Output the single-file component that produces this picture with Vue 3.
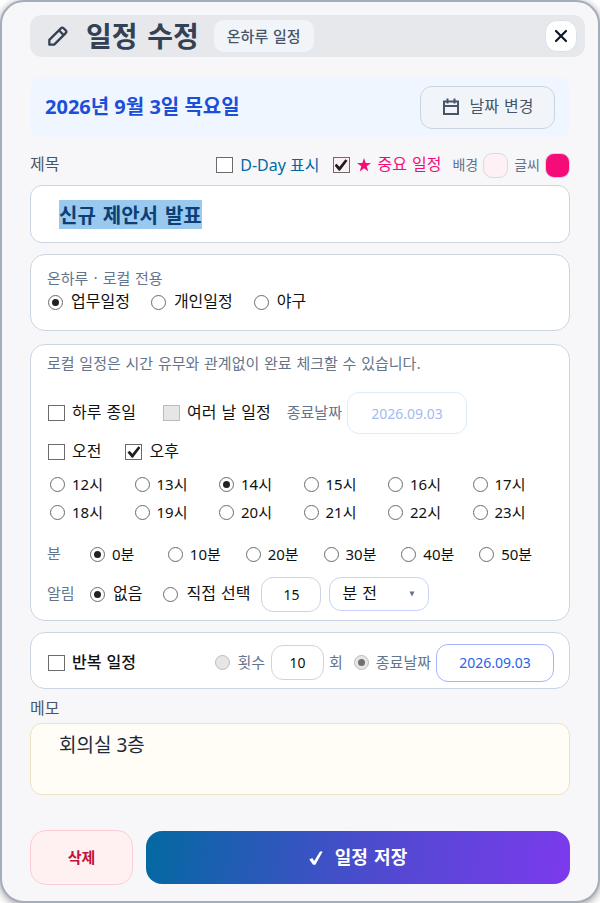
<template>
  <form class="editor" @submit.prevent>
    <header class="header">
      <svg class="pencil" viewBox="0 0 24 24" fill="none" stroke="currentColor">
        <path d="M3.5 20.5v-5L15.8 3.2a1.6 1.6 0 0 1 2.3 0l2.7 2.7a1.6 1.6 0 0 1 0 2.3L8.5 20.5z" stroke-width="2.4" stroke-linejoin="round"/>
        <path d="M13.5 5.5l5 5" stroke-width="2.4"/>
      </svg>
      <h1 class="title">일정 수정</h1>
      <span class="badge">온하루 일정</span>
      <button type="button" class="close-btn" aria-label="닫기">
        <svg viewBox="0 0 14 14" fill="none" stroke="currentColor">
          <path d="M2 2l10 10M12 2L2 12" stroke-width="2.2" stroke-linecap="round"/>
        </svg>
      </button>
    </header>

    <section class="date-bar">
      <strong class="date-text">2026년 9월 3일 목요일</strong>
      <button type="button" class="date-btn">
        <svg viewBox="0 0 18 18" fill="none" stroke="currentColor">
          <path d="M2 3.5h14v12.5H2zM2 8h14" stroke-width="2"/>
          <path d="M5.5 0.5v5M12.5 0.5v5" stroke-width="2"/>
        </svg>
        날짜 변경
      </button>
    </section>

    <div class="title-row">
      <label class="field-label" for="subject">제목</label>
      <label class="option dday"><input v-model="dday" type="checkbox" />D-Day 표시</label>
      <label class="option important">
        <input v-model="important" type="checkbox" />
        <svg class="star" viewBox="0 0 14 14" fill="currentColor">
          <path d="M7 0l1.7 5H14L9.7 8.2 11.3 13.4 7 10.2 2.7 13.4 4.3 8.2 0 5h5.3z"/>
        </svg>
        중요 일정
      </label>
      <span class="swatch-label">배경</span>
      <button type="button" class="swatch swatch-bg" aria-label="배경색"></button>
      <span class="swatch-label">글씨</span>
      <button type="button" class="swatch swatch-fg" aria-label="글씨색"></button>
    </div>

    <input id="subject" ref="subjectInput" v-model="subject" class="subject" type="text" />

    <section class="card type-card">
      <p class="hint">온하루 · 로컬 전용</p>
      <div class="type-row">
        <label v-for="item in types" :key="item" class="option">
          <input v-model="type" type="radio" name="type" :value="item" />{{ item }}
        </label>
      </div>
    </section>

    <section class="card time-card">
      <p class="hint">로컬 일정은 시간 유무와 관계없이 완료 체크할 수 있습니다.</p>

      <div class="day-row">
        <label class="option"><input v-model="allDay" type="checkbox" />하루 종일</label>
        <label class="option multi-day"><input type="checkbox" disabled />여러 날 일정</label>
        <label class="hint end-label" for="end-date">종료날짜</label>
        <input id="end-date" class="box-input end-date" type="text" value="2026.09.03" disabled />
      </div>

      <div class="ampm-row">
        <label class="option"><input v-model="am" type="checkbox" />오전</label>
        <label class="option"><input v-model="pm" type="checkbox" />오후</label>
      </div>

      <div class="hour-grid">
        <label v-for="h in hours" :key="h" class="option num">
          <input v-model="hour" type="radio" name="hour" :value="h" />{{ h }}시
        </label>
      </div>

      <div class="minute-row">
        <span class="hint row-label">분</span>
        <div class="minute-grid">
          <label v-for="m in minutes" :key="m" class="option num">
            <input v-model="minute" type="radio" name="minute" :value="m" />{{ m }}분
          </label>
        </div>
      </div>

      <div class="alarm-row">
        <span class="hint row-label">알림</span>
        <label class="option"><input v-model="alarm" type="radio" name="alarm" value="none" />없음</label>
        <label class="option alarm-custom"><input v-model="alarm" type="radio" name="alarm" value="custom" />직접 선택</label>
        <input v-model="alarmValue" class="box-input alarm-value" type="text" aria-label="알림 시간" />
        <div class="select-wrap">
          <select v-model="alarmUnit" class="unit-select" aria-label="알림 단위">
            <option>분 전</option>
            <option>시간 전</option>
          </select>
          <svg class="arrow" viewBox="0 0 6 6" fill="currentColor"><path d="M0.5 0.5h5L3 5.5z"/></svg>
        </div>
      </div>
    </section>

    <section class="card repeat-card">
      <label class="option repeat"><input v-model="repeat" type="checkbox" />반복 일정</label>
      <label class="option muted"><input type="radio" name="repeat-end" disabled />횟수</label>
      <input v-model="repeatCount" class="box-input count" type="text" aria-label="횟수" />
      <span class="hint">회</span>
      <label class="option muted until"><input type="radio" name="repeat-end" checked disabled />종료날짜</label>
      <input v-model="repeatUntil" class="box-input until-date" type="text" aria-label="반복 종료날짜" />
    </section>

    <label class="field-label memo-label" for="memo">메모</label>
    <textarea id="memo" v-model="memo" class="memo"></textarea>

    <footer class="footer">
      <button type="button" class="delete-btn">삭제</button>
      <button type="submit" class="save-btn">
        <svg viewBox="0 0 14 14" fill="currentColor">
          <path d="M0.3 8.6l3-1.5 1.9 2.9L11 0.5h2.7L6.4 13.8H4.1z"/>
        </svg>
        일정 저장
      </button>
    </footer>
  </form>
</template>

<script setup>
import { ref, onMounted } from 'vue'

const types = ['업무일정', '개인일정', '야구']
const hours = [12, 13, 14, 15, 16, 17, 18, 19, 20, 21, 22, 23]
const minutes = [0, 10, 20, 30, 40, 50]

const subjectInput = ref(null)
const subject = ref('신규 제안서 발표')
const dday = ref(false)
const important = ref(true)
const type = ref('업무일정')
const allDay = ref(false)
const am = ref(false)
const pm = ref(true)
const hour = ref(14)
const minute = ref(0)
const alarm = ref('none')
const alarmValue = ref('15')
const alarmUnit = ref('분 전')
const repeat = ref(false)
const repeatCount = ref('10')
const repeatUntil = ref('2026.09.03')
const memo = ref('회의실 3층')

// 열리면 제목을 바로 고칠 수 있게 전체 선택
onMounted(() => {
  subjectInput.value.focus()
  subjectInput.value.select()
})
</script>

<style>
body {
  margin: 0;
  background: #fff;
}
</style>

<style scoped>
* {
  box-sizing: border-box;
}

.editor {
  display: flex;
  flex-direction: column;
  min-height: 100vh;
  padding: 13px 28px 16px;
  background: #f7f7fa;
  border: 2px solid #a5adb9;
  border-radius: 24px;
  box-shadow: 0 2px 8px rgba(0, 0, 0, 0.4);
  font-family: 'DejaVu Sans', 'Noto Sans CJK KR', sans-serif;
  font-size: 16px;
  line-height: 24px;
  color: #111;
}

button,
input,
select,
textarea {
  margin: 0;
  font: inherit;
  color: inherit;
  outline: none;
}

button {
  display: flex;
  align-items: center;
  justify-content: center;
  padding: 0;
  cursor: pointer;
}

p,
h1 {
  margin: 0;
}

svg {
  flex: none;
}

/* 헤더 */
.header {
  display: flex;
  align-items: center;
  height: 42px;
  margin-right: -15px;
  padding: 0 8px 0 16px;
  background: #e7e8eb;
  border-radius: 12px;
}

.pencil {
  width: 23px;
  height: 23px;
  color: #334155;
}

.title {
  margin-left: 17px;
  padding-top: 4px;
  font-size: 28px;
  line-height: 38px;
  font-weight: 700;
  color: #334155;
}

.badge {
  margin-left: 15px;
  padding: 5px 13px 3px;
  background: #f1f5f9;
  border-radius: 10px;
  font-size: 15px;
  font-weight: 500;
  color: #475569;
}

.close-btn {
  width: 32px;
  height: 32px;
  margin-left: auto;
  background: #fff;
  border: 1px solid #dbe1ec;
  border-radius: 12px;
  color: #0f172a;
}

.close-btn svg {
  width: 14px;
  height: 14px;
}

/* 날짜 */
.date-bar {
  display: flex;
  align-items: center;
  justify-content: space-between;
  height: 60px;
  margin-top: 20px;
  padding: 0 15px;
  background: #eff6ff;
  border-radius: 12px;
}

.date-text {
  font-family: 'Noto Sans', 'Noto Sans CJK KR', sans-serif;
  font-size: 20px;
  color: #1d4ed8;
}

.date-btn {
  width: 135px;
  height: 43px;
  gap: 10px;
  background: #f1f5f9;
  border: 1px solid #cbd5e1;
  border-radius: 12px;
  color: #475569;
}

.date-btn svg {
  width: 18px;
  height: 18px;
}

/* 체크박스, 라디오 */
.option {
  display: inline-flex;
  align-items: center;
  gap: 7px;
  white-space: nowrap;
}

.num {
  font-family: 'Noto Sans', 'Noto Sans CJK KR', sans-serif;
  font-size: 15px;
}

.option input {
  display: grid;
  place-content: center;
  flex: none;
  appearance: none;
  background: #fff;
  border: 1px solid #6b6b6b;
}

.option input[type='checkbox'] {
  width: 17px;
  height: 16px;
}

.option input[type='checkbox']:checked::before {
  content: '';
  width: 13px;
  height: 12px;
  background: #1f1f1f;
  clip-path: polygon(0 55%, 16% 40%, 38% 64%, 84% 2%, 100% 14%, 42% 98%, 34% 98%);
}

.option input[type='radio'] {
  width: 15px;
  height: 15px;
  border-radius: 50%;
}

.option input[type='radio']:checked::before {
  content: '';
  width: 7px;
  height: 7px;
  border-radius: 50%;
  background: #222;
}

.option input:disabled {
  background: #e6e6e6;
  border-color: #bcbcbc;
}

.option input[type='radio']:disabled:checked::before {
  background: #707070;
}

/* 제목 */
.title-row {
  display: flex;
  align-items: center;
  height: 28px;
  margin-top: 14px;
}

.field-label {
  font-size: 16px;
  color: #475569;
}

.dday {
  margin-left: auto;
  font-family: 'Noto Sans', 'Noto Sans CJK KR', sans-serif;
  color: #0369a1;
}

.important {
  margin: 0 11px 0 13px;
  color: #f50c78;
}

.important input {
  background: #fff0f6;
}

.star {
  width: 14px;
  height: 14px;
}

.swatch-label {
  font-size: 14px;
  color: #64748b;
}

.swatch {
  width: 25px;
  height: 25px;
  margin-left: 5px;
  border: 1px solid #d5dbe6;
  border-radius: 9px;
}

.swatch-bg {
  margin-right: 6px;
  background: #fff0f6;
}

.swatch-fg {
  background: #f50c78;
}

.subject {
  width: 100%;
  height: 58px;
  margin-top: 6px;
  padding: 0 28px;
  background: #fff;
  border: 1px solid #cbd5e1;
  border-radius: 12px;
  font-size: 20px;
  font-weight: 700;
  color: #0c3f73;
}

.subject::selection {
  background: #99c9ef;
  color: #0c3f73;
}

/* 카드 */
.card {
  background: #fff;
  border: 1px solid #cbd5e1;
  border-radius: 15px;
}

.hint {
  font-size: 15px;
  line-height: 20px;
  color: #64748b;
}

.type-card {
  margin-top: 11px;
  padding: 14px 16px 16px;
}

.type-row {
  display: flex;
  gap: 21px;
  margin-top: 1px;
  padding-left: 1px;
}

.type-row .option,
.alarm-row .option {
  gap: 8px;
}

.time-card {
  margin-top: 13px;
  padding: 9px 12px 8px 16px;
}

.day-row,
.ampm-row,
.minute-row,
.alarm-row {
  display: flex;
  align-items: center;
}

.day-row {
  margin-top: 18px;
  padding-left: 1px;
}

.multi-day {
  margin-left: 27px;
}

.end-label {
  margin-left: 16px;
}

.box-input {
  padding: 0;
  background: #fff;
  border: 1px solid #cbd5e1;
  border-radius: 12px;
  font-family: 'Noto Sans', sans-serif;
  font-size: 14px;
  text-align: center;
}

.end-date {
  width: 120px;
  height: 42px;
  margin-left: 5px;
  border-color: #dfebfd;
  color: #a3bbf3;
}

.ampm-row {
  gap: 24px;
  margin-top: 6px;
  padding-left: 1px;
}

.hour-grid {
  display: grid;
  grid-template-columns: repeat(6, 1fr);
  grid-auto-rows: 28px;
  margin-top: 6px;
  padding-left: 3px;
}

.minute-row {
  margin-top: 16px;
}

.row-label {
  flex: none;
  width: 43px;
}

.minute-grid {
  display: grid;
  flex: 1;
  grid-template-columns: repeat(6, 1fr);
}

.alarm-row {
  height: 36px;
  margin-top: 10px;
}

.alarm-custom {
  margin-left: 21px;
}

.alarm-value {
  width: 60px;
  height: 35px;
  margin-left: 11px;
}

.select-wrap {
  position: relative;
  margin-left: 8px;
}

.unit-select {
  display: block;
  width: 100px;
  height: 34px;
  padding: 0 12px;
  appearance: none;
  background: #fff;
  border: 1px solid #c7d2fe;
  border-radius: 12px;
}

.arrow {
  position: absolute;
  top: 14px;
  right: 14px;
  width: 6px;
  height: 6px;
  color: #64748b;
  pointer-events: none;
}

/* 반복 */
.repeat-card {
  display: flex;
  align-items: center;
  height: 57px;
  margin-top: 11px;
  padding: 4px 15px 0 17px;
}

.repeat {
  margin-right: auto;
  font-weight: 500;
}

.muted {
  font-size: 15px;
  color: #64748b;
}

.count {
  width: 53px;
  height: 35px;
  margin: 0 5px 0 6px;
}

.until {
  margin-left: 11px;
}

.until-date {
  width: 118px;
  height: 38px;
  margin-left: 5px;
  border-color: #a5b4fc;
  color: #2563eb;
}

/* 메모 */
.memo-label {
  margin-top: 8px;
}

.memo {
  width: 100%;
  height: 72px;
  margin-top: 2px;
  padding: 9px 28px;
  resize: none;
  background: #fffdf5;
  border: 1px solid #ece3c4;
  border-radius: 12px;
  font-family: 'Noto Sans', 'Noto Sans CJK KR', sans-serif;
  font-size: 19px;
  color: #1e293b;
}

/* 하단 버튼 */
.footer {
  display: flex;
  align-items: center;
  gap: 13px;
  margin-top: auto;
}

.delete-btn {
  width: 103px;
  height: 55px;
  background: #fff1f2;
  border: 1px solid #fecdd3;
  border-radius: 16px;
  font-size: 15px;
  font-weight: 700;
  color: #be123c;
}

.save-btn {
  flex: 1;
  height: 53px;
  gap: 12px;
  background: linear-gradient(98deg, #0369a1, #4f4ad0 55%, #7c3aed);
  border: none;
  border-radius: 16px;
  font-size: 18px;
  font-weight: 700;
  color: #fff;
}

.save-btn svg {
  width: 14px;
  height: 14px;
}
</style>
